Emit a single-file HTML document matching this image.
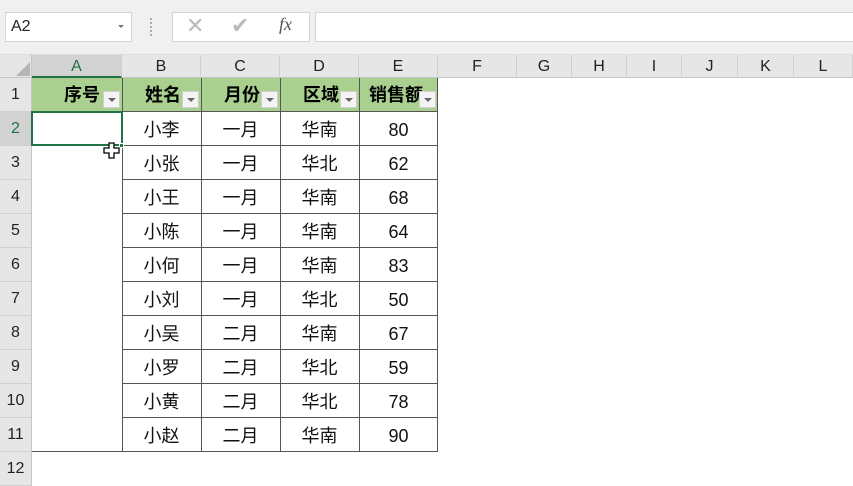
<!DOCTYPE html>
<html><head><meta charset="utf-8"><style>
*{margin:0;padding:0;box-sizing:border-box}
body{width:853px;height:480px;overflow:hidden;background:#fff;position:relative;font-family:"Liberation Sans","Noto Sans CJK SC",sans-serif;}
.a{position:absolute}
.top{left:0;top:0;width:853px;height:55px;background:#f0f0f0;border-bottom:1px solid #dcdcdc}
.box{background:#fff;border:1px solid #d4d4d4}
.ch{top:55px;height:23px;background:#e6e6e6;border-right:1px solid #d0d0d0;border-bottom:1px solid #c6c6c6;text-align:center;font-size:16px;line-height:23px;color:#222}
.rh{left:0;width:32px;height:34px;background:#e6e6e6;border-bottom:1px solid #d0d0d0;border-right:1px solid #c6c6c6;text-align:center;font-size:16px;line-height:34px;color:#222}
.g{background:#a9d08e;font-weight:bold;font-size:18px;line-height:34px;height:34px;text-align:center}
.dd{position:absolute;width:17px;height:17px;background:#f4f4f4;border:1px solid #d0d0d0;top:13px}
.dd:after{content:"";position:absolute;left:4px;top:6px;border-left:4px solid transparent;border-right:4px solid transparent;border-top:4px solid #666}
.v{width:1px;height:374px;top:78px;background:#555}
</style></head><body>
<div class="a top"></div>
<div class="a box" style="left:5px;top:12px;width:127px;height:30px;font-size:16px;line-height:28px;padding-left:5px;color:#222">A2</div>
<div class="a" style="left:118px;top:25px;border-left:3px solid transparent;border-right:3px solid transparent;border-top:3px solid #777"></div>
<div class="a" style="left:150px;top:18px;width:2px;height:18px;border-left:2px dotted #aaa"></div>
<div class="a box" style="left:172px;top:12px;width:138px;height:30px"></div>
<div class="a" style="left:186px;top:13px;font-size:22px;color:#bbb">✕</div>
<div class="a" style="left:231px;top:13px;font-size:22px;color:#bbb">✔</div>
<div class="a" style="left:279px;top:14px;font-size:18px;font-style:italic;font-family:'Liberation Serif',serif;color:#555">fx</div>
<div class="a box" style="left:315px;top:12px;width:540px;height:30px"></div>
<div class="a" style="left:0;top:55px;width:32px;height:23px;background:#e6e6e6;border-right:1px solid #c6c6c6;border-bottom:1px solid #c6c6c6"></div>
<div class="a" style="left:16px;top:62px;border-left:14px solid transparent;border-bottom:14px solid #b5b5b5"></div>
<div class="a ch" style="left:32px;width:90px;background:#d2d2d2;color:#217346;border-bottom:2px solid #217346">A</div>
<div class="a ch" style="left:122px;width:79px">B</div>
<div class="a ch" style="left:201px;width:79px">C</div>
<div class="a ch" style="left:280px;width:79px">D</div>
<div class="a ch" style="left:359px;width:79px">E</div>
<div class="a ch" style="left:438px;width:79px">F</div>
<div class="a ch" style="left:517px;width:55px">G</div>
<div class="a ch" style="left:572px;width:55px">H</div>
<div class="a ch" style="left:627px;width:55px">I</div>
<div class="a ch" style="left:682px;width:56px">J</div>
<div class="a ch" style="left:738px;width:56px">K</div>
<div class="a ch" style="left:794px;width:59px">L</div>
<div class="a rh" style="top:78px">1</div>
<div class="a rh" style="top:112px;background:#d2d2d2;color:#217346">2</div>
<div class="a rh" style="top:146px">3</div>
<div class="a rh" style="top:180px">4</div>
<div class="a rh" style="top:214px">5</div>
<div class="a rh" style="top:248px">6</div>
<div class="a rh" style="top:282px">7</div>
<div class="a rh" style="top:316px">8</div>
<div class="a rh" style="top:350px">9</div>
<div class="a rh" style="top:384px">10</div>
<div class="a rh" style="top:418px">11</div>
<div class="a rh" style="top:452px">12</div>
<div class="a g" style="left:32px;top:78px;width:90px;padding-right:22px;text-align:right">序号<div class="dd" style="left:71px"></div></div>
<div class="a g" style="left:122px;top:78px;width:79px;padding-right:20px;text-align:right">姓名<div class="dd" style="left:60px"></div></div>
<div class="a g" style="left:201px;top:78px;width:79px;padding-right:20px;text-align:right">月份<div class="dd" style="left:60px"></div></div>
<div class="a g" style="left:280px;top:78px;width:79px;padding-right:20px;text-align:right">区域<div class="dd" style="left:60px"></div></div>
<div class="a g" style="left:359px;top:78px;width:79px;overflow:hidden;white-space:nowrap;text-align:left;padding-left:10px">销售额<div class="dd" style="left:60px"></div></div>
<div class="a v" style="left:122px"></div>
<div class="a v" style="left:201px"></div>
<div class="a v" style="left:280px"></div>
<div class="a v" style="left:359px"></div>
<div class="a v" style="left:437px"></div>
<div class="a" style="left:122px;top:111px;width:316px;height:1px;background:#555"></div>
<div class="a" style="left:122px;top:145px;width:316px;height:1px;background:#555"></div>
<div class="a" style="left:122px;top:179px;width:316px;height:1px;background:#555"></div>
<div class="a" style="left:122px;top:213px;width:316px;height:1px;background:#555"></div>
<div class="a" style="left:122px;top:247px;width:316px;height:1px;background:#555"></div>
<div class="a" style="left:122px;top:281px;width:316px;height:1px;background:#555"></div>
<div class="a" style="left:122px;top:315px;width:316px;height:1px;background:#555"></div>
<div class="a" style="left:122px;top:349px;width:316px;height:1px;background:#555"></div>
<div class="a" style="left:122px;top:383px;width:316px;height:1px;background:#555"></div>
<div class="a" style="left:122px;top:417px;width:316px;height:1px;background:#555"></div>
<div class="a" style="left:32px;top:451px;width:406px;height:1px;background:#555"></div>

<div class="a" style="left:122px;top:113px;width:316px">
<div style="display:grid;grid-template-columns:79px 79px 79px 79px;grid-auto-rows:34px;font-size:18px;line-height:34px;text-align:center;color:#111">
<div>小李</div><div>一月</div><div>华南</div><div>80</div>
<div>小张</div><div>一月</div><div>华北</div><div>62</div>
<div>小王</div><div>一月</div><div>华南</div><div>68</div>
<div>小陈</div><div>一月</div><div>华南</div><div>64</div>
<div>小何</div><div>一月</div><div>华南</div><div>83</div>
<div>小刘</div><div>一月</div><div>华北</div><div>50</div>
<div>小吴</div><div>二月</div><div>华南</div><div>67</div>
<div>小罗</div><div>二月</div><div>华北</div><div>59</div>
<div>小黄</div><div>二月</div><div>华北</div><div>78</div>
<div>小赵</div><div>二月</div><div>华南</div><div>90</div>
</div></div>
<div class="a" style="left:31px;top:111px;width:92px;height:35px;border:2px solid #217346"></div>
<div class="a" style="left:119px;top:143px;width:5px;height:5px;background:#217346;border:1px solid #fff"></div>
<svg class="a" style="left:103px;top:142px" width="18" height="18" viewBox="0 0 18 18"><path d="M6 1h5v5h5v5h-5v5h-5v-5h-5v-5h5z" fill="#fff" stroke="#000" stroke-width="1.3"/></svg>
</body></html>
